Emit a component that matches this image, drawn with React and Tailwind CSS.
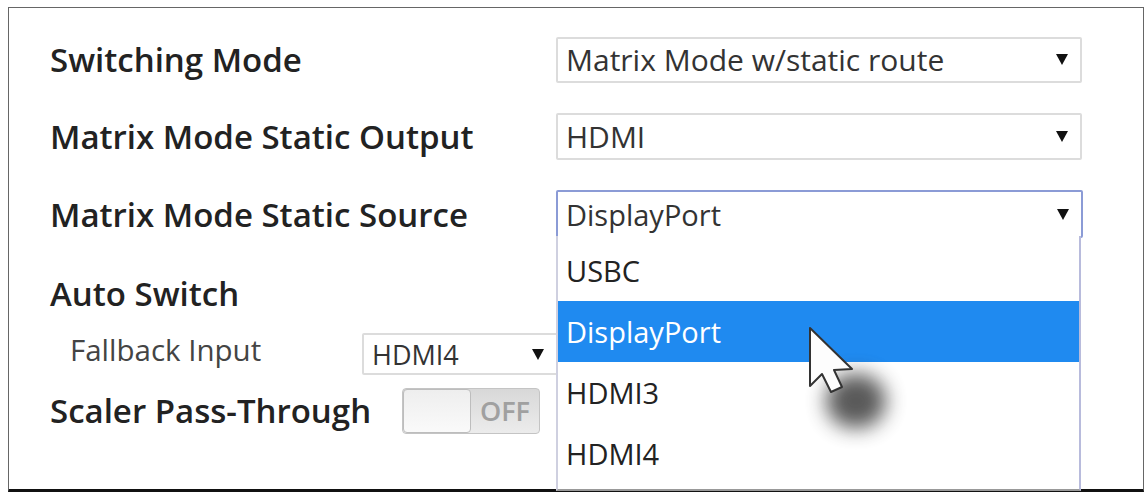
import React from "react";

const F = { fontFamily: '"Open Sans", "Noto Sans", sans-serif' };

function Arrow() {
  return (
    <svg width="12" height="11" viewBox="0 0 12 11" className="shrink-0">
      <path d="M0 0 H12 L6 11 Z" fill="#111" />
    </svg>
  );
}

function Select({ value, className = "", textClass = "text-[30px]", focused = false, children }) {
  return (
    <div
      className={`relative flex items-center justify-between bg-white pl-[8px] pr-[12px] rounded-[2px] ${
        focused ? "border-2 border-[#8b9bd6]" : "border-2 border-[#dcdcdc]"
      } ${className}`}
    >
      <span className={`text-[#333] leading-none ${textClass}`}>{value}</span>
      <Arrow />
      {children}
    </div>
  );
}

function Cursor() {
  return (
    <div className="absolute left-[800px] top-[318px] z-30 pointer-events-none">
      <div className="absolute left-[26px] top-[56px] w-[60px] h-[54px] rounded-full bg-[#222] opacity-75 blur-[10px]" />
      <svg width="60" height="80" viewBox="0 0 60 80" className="relative">
        <path
          d="M10 10 L10 68 L22 56 L31 74 L42 69 L34 52 L52 51 Z"
          fill="#fdfdfd"
          stroke="#333"
          strokeWidth="2"
          strokeLinejoin="round"
        />
      </svg>
    </div>
  );
}

export default function App() {
  const items = ["USBC", "DisplayPort", "HDMI3", "HDMI4"];
  const label = "text-[33px] font-semibold text-[#222] leading-none";
  return (
    <div className="w-[1148px] h-[496px] bg-white overflow-hidden" style={F}>
      <div className="relative ml-[8px] mt-[7px] w-[1136px] h-[485px] border border-[#666] border-b-[3px] border-b-[#111]">
        <div className="flex flex-col pl-[41px] pt-[28px]">
          {/* Row 1 */}
          <div className="flex items-center h-[47px]">
            <div className={`w-[506px] ${label}`}>Switching Mode</div>
            <Select value="Matrix Mode w/static route" className="w-[526px] h-[46px]" />
          </div>
          <div className="h-[30px]" />
          {/* Row 2 */}
          <div className="flex items-center h-[47px]">
            <div className={`w-[506px] ${label}`}>Matrix Mode Static Output</div>
            <Select value="HDMI" className="w-[526px] h-[47px]" />
          </div>
          <div className="h-[30px]" />
          {/* Row 3 */}
          <div className="flex items-center h-[48px] relative z-20">
            <div className={`w-[506px] ${label}`}>Matrix Mode Static Source</div>
            <Select value="DisplayPort" focused className="w-[527px] h-[48px]" textClass="text-[29px]">
              <div className="absolute left-[-2px] top-[44px] w-[525px] h-[255px] bg-white border-l-2 border-r-2 border-b-2 border-l-[#cfd0e0] border-r-[#b8bbdc] border-b-[#999] pt-[4px]">
                {items.map((it) => (
                  <div
                    key={it}
                    className={`h-[61px] flex items-center pl-[8px] text-[29px] leading-none ${
                      it === "DisplayPort" ? "bg-[#1f8af0] text-white" : "text-[#222]"
                    }`}
                  >
                    {it}
                  </div>
                ))}
              </div>
            </Select>
          </div>
          {/* Auto switch */}
          <div className="flex items-center h-[46px] mt-[32px]">
            <div className={label}>Auto Switch</div>
          </div>
          {/* Fallback */}
          <div className="flex items-center h-[42px] mt-[17px]">
            <div className="w-[312px] pl-[20px] text-[29.5px] text-[#444] leading-none -translate-y-[4px]">Fallback Input</div>
            <Select value="HDMI4" className="w-[196px] h-[42px]" textClass="text-[27px]" />
          </div>
          {/* Scaler */}
          <div className="flex items-center h-[47px] mt-[12px]">
            <div className={`w-[352px] ${label}`}>Scaler Pass-Through</div>
            <div className="flex w-[138px] h-[46px] rounded-[4px] border border-[#c4c4c4] bg-gradient-to-b from-[#d8d8d8] to-[#ececec] overflow-hidden">
              <div className="w-[68px] h-full rounded-[4px] border border-[#bdbdbd] bg-gradient-to-b from-[#eeeeee] to-[#fafafa]" />
              <div className="flex-1 flex items-center justify-center text-[27px] font-semibold text-[#a0a0a0] leading-none">OFF</div>
            </div>
          </div>
        </div>
      </div>
      <Cursor />
    </div>
  );
}
